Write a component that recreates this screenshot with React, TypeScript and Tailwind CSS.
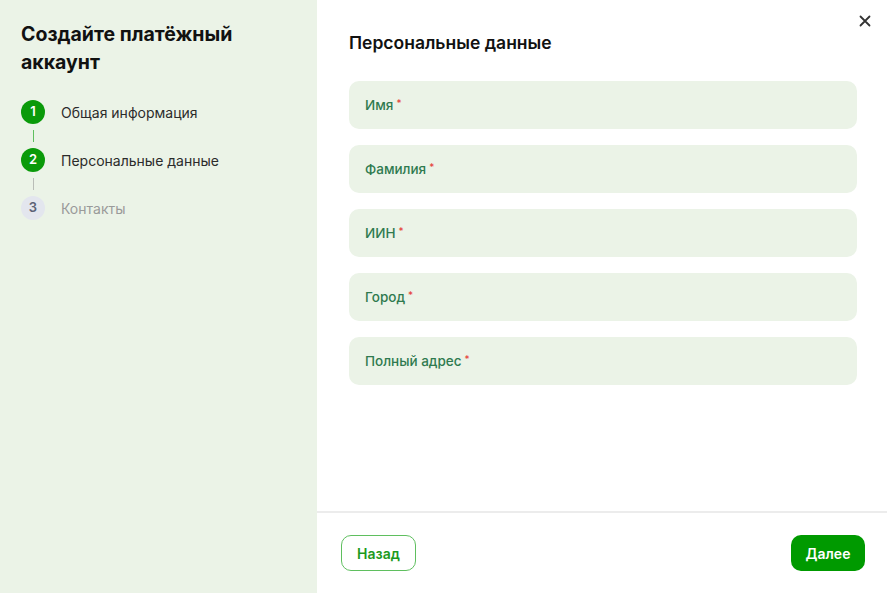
import React from "react";

const steps = [
  { n: 1, label: "Общая информация", state: "done" },
  { n: 2, label: "Персональные данные", state: "active" },
  { n: 3, label: "Контакты", state: "todo" },
];

const fields = ["Имя", "Фамилия", "ИИН", "Город", "Полный адрес"];

function Step({ n, label, state, last }: { n: number; label: string; state: string; last: boolean }) {
  const on = state !== "todo";
  return (
    <div className="flex flex-col">
      <div className="flex items-center gap-[16px]">
        <div
          className={
            on
              ? "w-[24px] h-[24px] rounded-full bg-[#0a9a0a] text-white text-[13px] font-semibold flex items-center justify-center"
              : "w-[24px] h-[24px] rounded-full bg-[#e3e6ee] text-[#5b6275] text-[13px] font-semibold flex items-center justify-center"
          }
        >
          {n}
        </div>
        <span className={on ? "text-[14px] text-[#2b2b2b]" : "text-[14px] text-[#9a9a9a]"}>{label}</span>
      </div>
      {!last && (
        <div className="h-[24px] w-[24px] flex items-center justify-center">
          <div className={n === 1 ? "w-px h-[12px] bg-[#5fbf5f]" : "w-px h-[12px] bg-[#b9bdb7]"} />
        </div>
      )}
    </div>
  );
}

export default function App() {
  return (
    <div
      className="w-[887px] h-[593px] flex bg-white overflow-hidden"
      style={{ fontFamily: "Inter, 'Noto Sans', sans-serif" }}
    >
      <aside className="w-[317px] shrink-0 bg-[#ebf3e7] pl-[21px] pt-[20px]">
        <h1 className="text-[19.5px] leading-[28px] font-bold text-[#111] w-[240px]">
          Создайте платёжный аккаунт
        </h1>
        <div className="mt-[24px] flex flex-col">
          {steps.map((s, i) => (
            <Step key={s.n} {...s} last={i === steps.length - 1} />
          ))}
        </div>
      </aside>

      <main className="flex-1 flex flex-col relative">
        <button className="absolute top-[14px] right-[15px] w-[14px] h-[14px] flex items-center justify-center text-[#333]">
          <svg width="12" height="12" viewBox="0 0 12 12" fill="none">
            <path d="M1.5 1.5L10.5 10.5M10.5 1.5L1.5 10.5" stroke="currentColor" strokeWidth="1.8" strokeLinecap="round" />
          </svg>
        </button>
        <div className="flex-1 pl-[32px] pr-[30px] pt-[31px]">
          <h2 className="text-[17.5px] leading-[24px] font-semibold text-[#111]">Персональные данные</h2>
          <div className="mt-[26px] flex flex-col gap-[16px]">
            {fields.map((f) => (
              <div key={f} className="h-[48px] rounded-[10px] bg-[#ebf3e7] flex items-center px-[16px]">
                <span className="text-[13.5px] font-medium text-[#2f7a4f]">{f}</span>
                <span className="text-[10px] leading-[10px] text-[#e53935] self-start mt-[17px] ml-[3px]">*</span>
              </div>
            ))}
          </div>
        </div>
        <div className="h-[82px] border-t-2 border-[#ececec] flex items-center justify-between pl-[24px] pr-[22px]">
          <button className="h-[36px] w-[75px] rounded-[10px] border-[1.5px] border-[#5fbf5f] text-[#1d9a1d] text-[14px] font-semibold flex items-center justify-center">
            Назад
          </button>
          <button className="h-[36px] w-[74px] rounded-[10px] bg-[#009a00] text-white text-[14px] font-semibold flex items-center justify-center">
            Далее
          </button>
        </div>
      </main>
    </div>
  );
}
